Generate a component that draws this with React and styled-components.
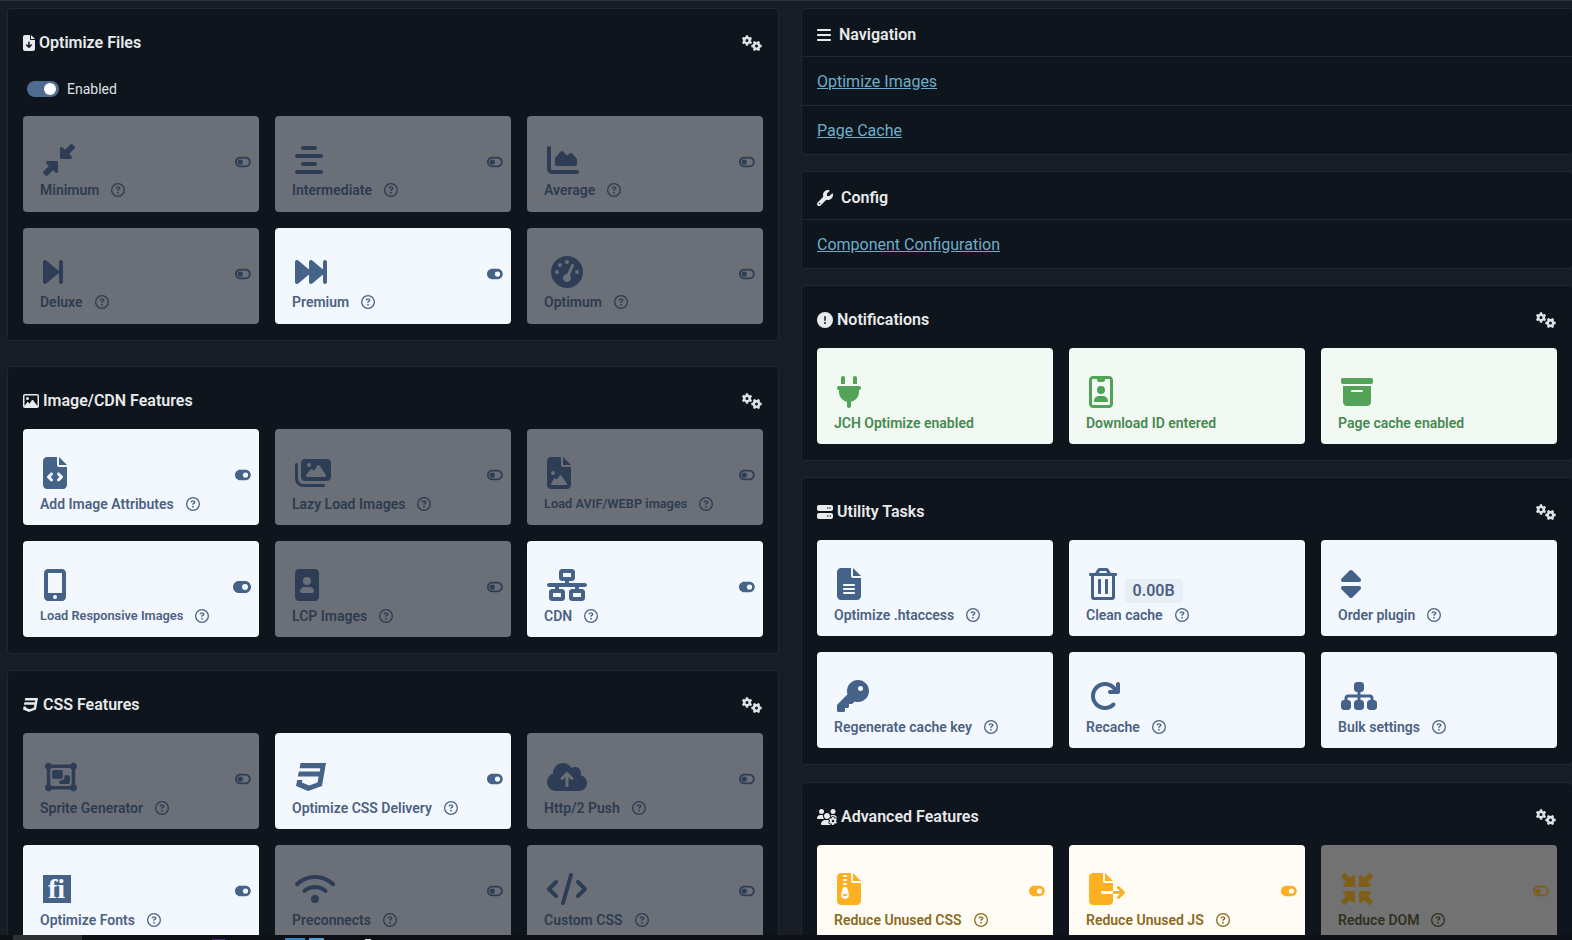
import styled, { createGlobalStyle } from "styled-components";
import {
  FaFileArrowDown, FaGears, FaDownLeftAndUpRightToCenter, FaAlignCenter, FaChartArea, FaForwardStep,
  FaForwardFast, FaGaugeHigh, FaRegImage, FaFileCode, FaImages, FaFileImage,
  FaMobileScreenButton, FaImagePortrait, FaNetworkWired, FaCss3, FaObjectGroup, FaCloudArrowUp,
  FaWifi, FaCode, FaBars, FaWrench, FaCircleExclamation, FaServer, FaUsersGear, FaPlug,
  FaRegIdBadge, FaBoxArchive, FaFileLines, FaSort, FaKey, FaArrowRotateRight, FaSitemap,
  FaFileZipper, FaFileExport, FaMinimize, FaToggleOn, FaToggleOff,
  FaRegCircleQuestion
} from "react-icons/fa6";
import { FaRegTrashAlt } from "react-icons/fa";

const GlobalStyle = createGlobalStyle`
  html, body {
    margin: 0;
    height: 940px;
    overflow: hidden;
    background: #181d25;
    font-family: Roboto, "Liberation Sans", sans-serif;
  }
`;

const tones = {
  on: { bg: "#f3f8ff", text: "#4c6282", icon: "#456288" },
  off: { bg: "#6b7078", text: "#2d3b4f", icon: "#2d3d55" },
  ok: { bg: "#f2f8f2", text: "#458a50", icon: "#52a257" },
  warn: { bg: "#fffcf5", text: "#8a6a1e", icon: "#fdb022" },
  warnOff: { bg: "#727272", text: "#33301f", icon: "#7f5f18" }
};

const Page = styled.div`
  display: flex;
  align-items: flex-start;
  gap: 22px;
  width: 1576px;
  padding: 7px 0 0 7px;
  box-sizing: border-box;
  border-top: 1px solid #2d323a;
`;

const Column = styled.div`
  display: flex;
  flex-direction: column;
  gap: 16px;
  width: 772px;
  flex: none;
`;

const Panel = styled.section`
  box-sizing: border-box;
  background: #0e151d;
  border: 1px solid #222831;
  border-radius: 4px;
`;

const CardPanel = styled(Panel)`
  padding: 0 15px 16px;
  margin-bottom: ${(p) => p.$after || 0}px;
`;

const Heading = styled.div`
  display: flex;
  align-items: center;
  justify-content: space-between;
  height: 62px;
  padding-top: 6px;
  box-sizing: border-box;
`;

const Title = styled.h3`
  display: flex;
  align-items: center;
  gap: ${(p) => p.$gap}px;
  margin: 0;
  font-size: 16px;
  line-height: 20px;
  font-weight: 600;
  color: #e8eaec;
  svg {
    flex: none;
    width: ${(p) => p.$iconWidth}px;
    height: 16px;
  }
`;

const Gears = styled(FaGears)`
  width: 20px;
  height: 16px;
  margin-right: 1px;
  color: #dfe2e5;
`;

const EnabledRow = styled.div`
  display: flex;
  align-items: center;
  gap: 8px;
  height: 45px;
  padding: 0 0 10px 4px;
  box-sizing: border-box;
  font-size: 14px;
  color: #dfe2e5;
`;

const Track = styled.span`
  position: relative;
  width: 32px;
  height: 16px;
  border-radius: 8px;
  background: #506b92;
`;

const Thumb = styled.span`
  position: absolute;
  top: 2px;
  right: 3px;
  width: 12px;
  height: 12px;
  border-radius: 50%;
  background: #fff;
`;

const Grid = styled.div`
  display: grid;
  grid-template-columns: repeat(3, 236px);
  grid-auto-rows: 96px;
  gap: 16px;
`;

const Card = styled.div`
  display: flex;
  flex-direction: column;
  align-items: flex-start;
  box-sizing: border-box;
  position: relative;
  height: 96px;
  padding: 28px 17px 0;
  border-radius: 4px;
  background: ${(p) => tones[p.$tone].bg};
  color: ${(p) => tones[p.$tone].text};
`;

const IconRow = styled.div`
  display: flex;
  align-items: center;
  height: 32px;
  padding-left: ${(p) => p.$pad}px;
  color: ${(p) => tones[p.$tone].icon};
  svg {
    width: ${(p) => p.$width}px;
    height: 32px;
    flex: none;
  }
`;

const Label = styled.div`
  display: flex;
  align-items: center;
  gap: 12px;
  margin-top: ${(p) => p.$offset}px;
  font-size: ${(p) => (p.$small ? "12.8px" : "14px")};
  line-height: 18px;
  font-weight: 600;
  white-space: nowrap;
`;

const Help = styled(FaRegCircleQuestion)`
  width: 14px;
  height: 14px;
  flex: none;
`;

const Toggle = styled.span`
  position: absolute;
  top: ${(p) => (p.$big ? 38 : 39)}px;
  right: 8px;
  display: flex;
  color: ${(p) => tones[p.$tone].icon};
  svg {
    width: ${(p) => (p.$big ? 18 : 15.75)}px;
    height: ${(p) => (p.$big ? 16 : 14)}px;
  }
`;

const Badge = styled.span`
  margin: 14px 0 0 8px;
  padding: 0 8px;
  height: 24px;
  line-height: 24px;
  border-radius: 4px;
  background: #e8eef6;
  font-size: 16px;
  font-weight: 600;
  color: #4c6282;
`;

const FontIcon = styled.span`
  display: flex;
  align-items: flex-end;
  justify-content: center;
  width: 28px;
  height: 28px;
  background: #456288;
  color: #f3f8ff;
  font-family: "Liberation Serif", serif;
  font-size: 28px;
  line-height: 28px;
  font-weight: 700;
`;

const ListHeader = styled.div`
  display: flex;
  align-items: center;
  box-sizing: border-box;
  height: 48px;
  padding: 5px 15px 0;
  border-bottom: 1px solid #222831;
`;

const ListRow = styled.div`
  display: flex;
  align-items: center;
  height: 49px;
  box-sizing: border-box;
  padding: 0 15px;
  border-bottom: 1px solid #222831;
  &:last-child {
    height: 48px;
    border-bottom: none;
  }
`;

const Link = styled.a`
  font-size: 16px;
  color: #6dadc9;
  text-decoration: underline;
`;

const BottomBar = styled.div`
  position: fixed;
  left: 0;
  right: 0;
  bottom: 0;
  height: 5px;
  background: #0d1014;
`;

const BarTab = styled.span`
  position: absolute;
  bottom: 0;
  left: ${(p) => p.$left}px;
  width: ${(p) => p.$width}px;
  height: ${(p) => p.$height}px;
  background: ${(p) => p.$color};
`;

const FeatureCard = ({ icon: Icon, w = 32, pad = 2.5, label, tone = "on", small, toggle, bigToggle, help = true, extra, custom, labelOffset }) => {
  const ToggleIcon = tone === "off" || tone === "warnOff" ? FaToggleOff : FaToggleOn;
  return (
    <Card $tone={tone}>
      <IconRow $tone={tone} $width={w} $pad={pad}>
        {custom || <Icon />}
        {extra}
      </IconRow>
      <Label $small={small} $offset={labelOffset}>
        {label}
        {help && <Help />}
      </Label>
      {toggle && (
        <Toggle $tone={tone} $big={bigToggle}>
          <ToggleIcon />
        </Toggle>
      )}
    </Card>
  );
};

const Section = ({ icon: Icon, iconWidth = 16, gap = 4, title, cards, after, labelOffset = 6, children }) => (
  <CardPanel $after={after}>
    <Heading>
      <Title $iconWidth={iconWidth} $gap={gap}>
        <Icon />
        {title}
      </Title>
      <Gears />
    </Heading>
    {children}
    <Grid>
      {cards.map((card) => (
        <FeatureCard key={card.label} labelOffset={labelOffset} {...card} />
      ))}
    </Grid>
  </CardPanel>
);

const optimizeCards = [
  { icon: FaDownLeftAndUpRightToCenter, label: "Minimum", tone: "off", toggle: true },
  { icon: FaAlignCenter, w: 28, label: "Intermediate", tone: "off", toggle: true },
  { icon: FaChartArea, label: "Average", tone: "off", toggle: true },
  { icon: FaForwardStep, w: 20, label: "Deluxe", tone: "off", toggle: true },
  { icon: FaForwardFast, label: "Premium", toggle: true },
  { icon: FaGaugeHigh, w: 40, label: "Optimum", tone: "off", toggle: true }
];

const imageCards = [
  { icon: FaFileCode, w: 24, label: "Add Image Attributes", toggle: true },
  { icon: FaImages, w: 36, label: "Lazy Load Images", tone: "off", toggle: true },
  { icon: FaFileImage, w: 24, label: "Load AVIF/WEBP images", tone: "off", toggle: true, small: true },
  { icon: FaMobileScreenButton, w: 24, label: "Load Responsive Images", toggle: true, small: true, bigToggle: true },
  { icon: FaImagePortrait, w: 24, label: "LCP Images", tone: "off", toggle: true },
  { icon: FaNetworkWired, w: 40, label: "CDN", toggle: true }
];

const cssCards = [
  { icon: FaObjectGroup, pad: 4.5, label: "Sprite Generator", tone: "off", toggle: true },
  { icon: FaCss3, pad: 4, label: "Optimize CSS Delivery", toggle: true },
  { icon: FaCloudArrowUp, w: 40, label: "Http/2 Push", tone: "off", toggle: true },
  { label: "Optimize Fonts", toggle: true, custom: <FontIcon>fi</FontIcon> },
  { icon: FaWifi, w: 40, label: "Preconnects", tone: "off", toggle: true },
  { icon: FaCode, w: 40, label: "Custom CSS", tone: "off", toggle: true }
];

const notificationCards = [
  { icon: FaPlug, w: 24, label: "JCH Optimize enabled", tone: "ok", help: false },
  { icon: FaRegIdBadge, w: 24, label: "Download ID entered", tone: "ok", help: false },
  { icon: FaBoxArchive, label: "Page cache enabled", tone: "ok", help: false }
];

const utilityCards = [
  { icon: FaFileLines, w: 24, label: "Optimize .htaccess" },
  { icon: FaRegTrashAlt, w: 28, label: "Clean cache", extra: <Badge>0.00B</Badge> },
  { icon: FaSort, w: 20, label: "Order plugin" },
  { icon: FaKey, label: "Regenerate cache key" },
  { icon: FaArrowRotateRight, label: "Recache" },
  { icon: FaSitemap, w: 36, label: "Bulk settings" }
];

const advancedCards = [
  { icon: FaFileZipper, w: 24, label: "Reduce Unused CSS", tone: "warn", toggle: true },
  { icon: FaFileExport, w: 36, label: "Reduce Unused JS", tone: "warn", toggle: true },
  { icon: FaMinimize, label: "Reduce DOM", tone: "warnOff", toggle: true }
];

export default function App() {
  return (
    <>
      <GlobalStyle />
      <Page>
        <Column>
          <Section icon={FaFileArrowDown} iconWidth={12} title="Optimize Files" cards={optimizeCards} after={9} labelOffset={5}>
            <EnabledRow>
              <Track>
                <Thumb />
              </Track>
              Enabled
            </EnabledRow>
          </Section>
          <Section icon={FaRegImage} title="Image/CDN Features" cards={imageCards} />
          <Section icon={FaCss3} title="CSS Features" cards={cssCards} />
        </Column>
        <Column>
          <Panel>
            <ListHeader>
              <Title $gap={8} $iconWidth={14}>
                <FaBars />
                Navigation
              </Title>
            </ListHeader>
            <ListRow>
              <Link href="#">Optimize Images</Link>
            </ListRow>
            <ListRow>
              <Link href="#">Page Cache</Link>
            </ListRow>
          </Panel>
          <Panel>
            <ListHeader>
              <Title $gap={8} $iconWidth={16}>
                <FaWrench />
                Config
              </Title>
            </ListHeader>
            <ListRow>
              <Link href="#">Component Configuration</Link>
            </ListRow>
          </Panel>
          <Section icon={FaCircleExclamation} title="Notifications" cards={notificationCards} />
          <Section icon={FaServer} title="Utility Tasks" cards={utilityCards} after={1} />
          <Section icon={FaUsersGear} iconWidth={20} title="Advanced Features" cards={advancedCards} />
        </Column>
      </Page>
      <BottomBar>
        <BarTab $left={13} $width={69} $height={5} $color="#2f3032" />
        <BarTab $left={212} $width={13} $height={1} $color="#4a2a78" />
        <BarTab $left={285} $width={20} $height={2} $color="#2f86c5" />
        <BarTab $left={309} $width={15} $height={2} $color="#4aa3d8" />
        <BarTab $left={365} $width={6} $height={1} $color="#d8d8d8" />
      </BottomBar>
    </>
  );
}
